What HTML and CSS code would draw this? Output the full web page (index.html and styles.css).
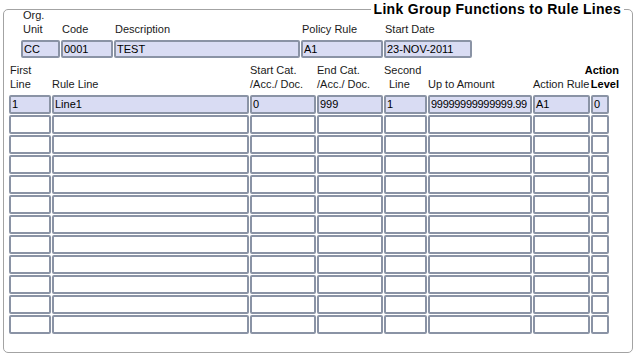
FILE: index.html
```html
<!DOCTYPE html>
<html lang="en">
<head>
<meta charset="UTF-8">
<title>Link Group Functions to Rule Lines</title>
<link rel="stylesheet" href="styles.css">
</head>
<body>
<div class="frame">
    <div class="title">Link Group Functions to Rule Lines</div>

    <div class="head">
        <div class="lbl lbl-org">Org.<br>Unit</div>
        <div class="lbl">Code</div>
        <div class="lbl">Description</div>
        <div class="lbl">Policy Rule</div>
        <div class="lbl">Start Date</div>
        <div class="fld filled">CC</div>
        <div class="fld filled">0001</div>
        <div class="fld filled">TEST</div>
        <div class="fld filled">A1</div>
        <div class="fld filled">23-NOV-2011</div>
    </div>

    <div class="grid cols">
        <div class="th">First<br>Line</div>
        <div class="th">Rule Line</div>
        <div class="th">Start Cat.<br>/Acc./ Doc.</div>
        <div class="th">End Cat.<br>/Acc./ Doc.</div>
        <div class="th th-second">Second<br><span>Line</span></div>
        <div class="th">Up to Amount</div>
        <div class="th">Action Rule</div>
        <div class="th th-level">Action<br>Level</div>
    </div>

    <div class="grid rows" id="rows">
        <div class="fld filled">1</div>
        <div class="fld filled">Line1</div>
        <div class="fld filled">0</div>
        <div class="fld filled">999</div>
        <div class="fld filled">1</div>
        <div class="fld filled num">99999999999999.99</div>
        <div class="fld filled">A1</div>
        <div class="fld filled">0</div>
    </div>
</div>

<script>
// filas vacias del bloque multi-registro
const rows = document.getElementById('rows');
for (let r = 0; r < 11; r++) {
    for (let c = 0; c < 8; c++) {
        const cell = document.createElement('div');
        cell.className = 'fld';
        rows.appendChild(cell);
    }
}
</script>
</body>
</html>
```

FILE: styles.css
```css
body {
    margin: 0;
    background-color: #fff;
    font-family: "Liberation Sans", Arial, sans-serif;
    font-size: 11px;
    color: #1a1a1a;
}
.frame {
    position: relative;
    box-sizing: border-box;
    width: 630px;
    height: 344px;
    margin: 9px 0 0 3px;
    border: 1px solid #a3a3a3;
    border-radius: 5px;
}
.title {
    position: absolute;
    top: -9px;
    right: 8px;
    padding: 0 3px;
    background-color: #fff;
    font-size: 14px;
    font-weight: bold;
    letter-spacing: 0.3px;
    line-height: 16px;
    color: #000;
}
.head {
    display: grid;
    grid-template-columns: 39px 52px 186px 82px 88px;
    grid-template-rows: 28px 18px;
    column-gap: 1px;
    row-gap: 4px;
    margin: -2px 0 0 17px;
}
.lbl {
    align-self: end;
    padding-left: 1px;
    line-height: 14px;
}
.lbl-org {
    padding-left: 2px;
}
.grid {
    display: grid;
    grid-template-columns: 42px 197px 66px 66px 43px 104px 57px 18px;
    column-gap: 1px;
    margin-left: 5px;
}
.cols {
    margin-top: 5px;
    margin-bottom: 4px;
    height: 28px;
}
.th {
    align-self: end;
    line-height: 14px;
    white-space: nowrap;
}
.th:first-child {
    padding-left: 1px;
}
.th-second span {
    padding-left: 5px;
}
.th-level {
    justify-self: end;
    margin-right: -10px;
    text-align: right;
    font-weight: bold;
    color: #000;
}
.rows {
    grid-auto-rows: 19px;
    row-gap: 1px;
}
.fld {
    box-sizing: border-box;
    height: 19px;
    padding-left: 1px;
    border: 2px solid #8a93a5;
    border-radius: 2px;
    background-color: #fff;
    line-height: 15px;
    color: #000;
    white-space: nowrap;
    overflow: hidden;
}
.head .fld {
    height: 18px;
    line-height: 14px;
}
.filled {
    background-color: #d9dcf3;
}
.num {
    letter-spacing: -0.3px;
}
```
